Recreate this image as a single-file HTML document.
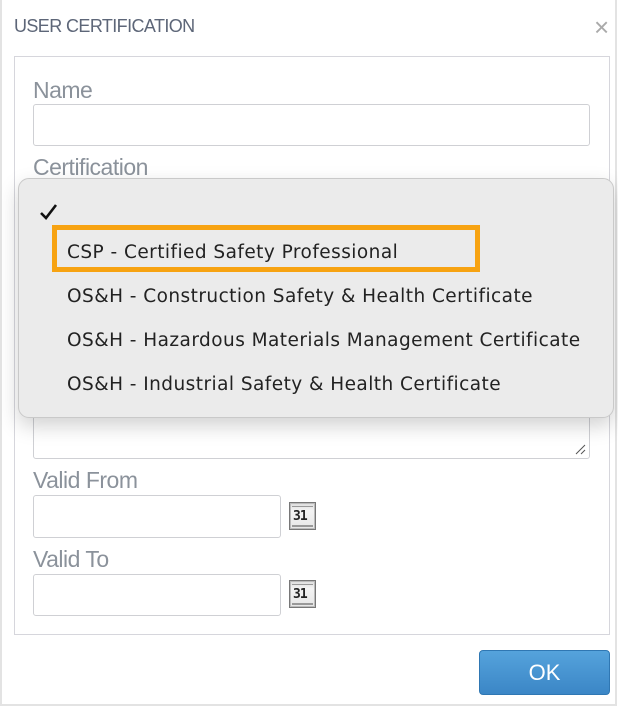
<!DOCTYPE html>
<html><head><style>
*{margin:0;padding:0;box-sizing:border-box}
body{width:618px;height:708px;background:#fff;position:relative;overflow:hidden;font-family:"Liberation Sans",sans-serif}
.outer{position:absolute;left:0;top:0;width:617px;height:706px;border:2px solid #e3e3e3;border-top:none}
.title{position:absolute;left:14px;top:16px;font-size:18px;color:#5d6678;letter-spacing:-0.6px}
.x{position:absolute;left:594px;top:12px;font-size:26px;color:#aaa;font-weight:300}
.fs{position:absolute;left:14px;top:56px;width:596px;height:579px;border:1px solid #d6d6dc}
.lbl{position:absolute;left:33px;font-size:23px;color:#8b929b;letter-spacing:-0.5px}
.inp{position:absolute;left:33px;border:1px solid #cfd0d4;border-radius:3px;background:#fff}
.cal{position:absolute;left:289px;width:27px;height:28px;border:1px solid #777;background:linear-gradient(#ddd,#f4f4f4 30%,#e6e6e6);box-shadow:inset 0 0 0 1px #bbb}
.cal span{position:absolute;left:3px;top:6px;font:bold 13px "DejaVu Sans Mono",monospace;color:#222;letter-spacing:-1px}
.cal:before{content:"";position:absolute;left:2px;right:2px;top:3px;border-top:1px solid #999}
.cal:after{content:"";position:absolute;left:2px;right:2px;bottom:2px;border-top:2px solid #999}
.menu{position:absolute;left:18px;top:178px;width:596px;height:240px;background:#ebebeb;border:1px solid #c9c9c9;border-radius:11px;box-shadow:0 8px 20px rgba(0,0,0,0.18)}
.it{position:absolute;left:48px;font-family:"DejaVu Sans",sans-serif;font-size:18.5px;color:#222;letter-spacing:0.45px}
.hl{position:absolute;left:33px;top:46px;width:428px;height:47px;border:5px solid #f7a312}
.ok{position:absolute;left:479px;top:650px;width:131px;height:45px;border:1px solid #2f77b3;border-radius:4px;background:linear-gradient(#55a3dc,#3b86c6);color:#fff;font-size:22px;text-align:center;line-height:43px}
</style></head><body>
<div class="outer"></div>
<div class="title">USER CERTIFICATION</div>
<div class="x">×</div>
<div class="fs"></div>
<div class="lbl" style="top:77px">Name</div>
<div class="inp" style="top:104px;width:557px;height:42px"></div>
<div class="lbl" style="top:154px">Certification</div>
<div class="inp" style="top:400px;width:557px;height:59px"><svg style="position:absolute;right:3px;bottom:3px" width="12" height="12"><path d="M2 11L11 2M7 11L11 7" stroke="#555" stroke-width="1"/></svg></div>
<div class="lbl" style="top:467px">Valid From</div>
<div class="inp" style="top:495px;width:248px;height:43px"></div>
<div class="cal" style="top:502px"><span>31</span></div>
<div class="lbl" style="top:546px">Valid To</div>
<div class="inp" style="top:574px;width:248px;height:42px"></div>
<div class="cal" style="top:580px"><span>31</span></div>
<div class="menu">
<svg style="position:absolute;left:20px;top:24px" width="20" height="18"><path d="M2 10L7 15L17 2" fill="none" stroke="#111" stroke-width="2.6"/></svg>
<div class="hl"></div>
<div class="it" style="top:63px">CSP - Certified Safety Professional</div>
<div class="it" style="top:107px">OS&amp;H - Construction Safety &amp; Health Certificate</div>
<div class="it" style="top:151px">OS&amp;H - Hazardous Materials Management Certificate</div>
<div class="it" style="top:195px">OS&amp;H - Industrial Safety &amp; Health Certificate</div>
</div>
<div class="ok">OK</div>
</body></html>
